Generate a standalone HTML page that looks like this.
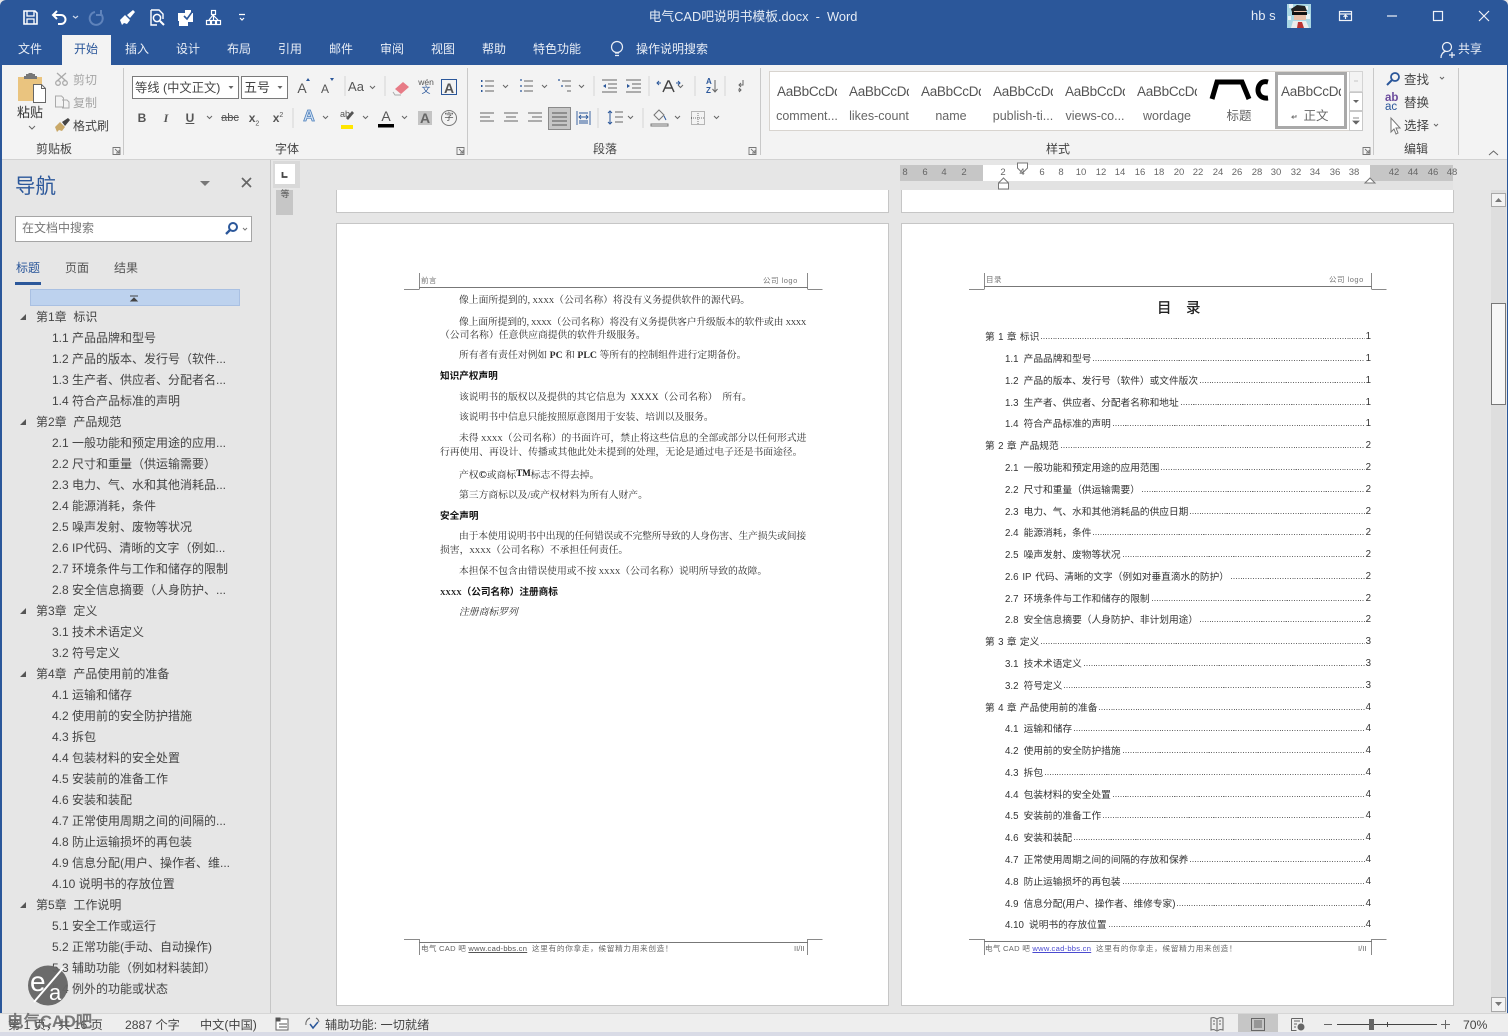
<!DOCTYPE html>
<html lang="zh-CN"><head><meta charset="utf-8"><title>Word</title>
<style>
html,body{margin:0;padding:0;background:#e6e6e6}
#w{position:relative;width:1508px;height:1036px;overflow:hidden;background:#e6e6e6;font-family:"Liberation Sans","Noto Sans CJK SC",sans-serif;color:#444;font-size:12px}
.b{position:absolute;box-sizing:border-box}
.t,.c{position:absolute;white-space:nowrap;line-height:20px;height:20px;margin-top:1px}
.c{transform:translateX(-50%)}
svg{position:absolute;left:0;top:0}
.tab{color:#e9eef6;font-size:12px}
.lab{font-size:12px;color:#444}
.n{font-size:12px;color:#444;margin-top:2px}
.st{font-size:13.5px;color:#555;overflow:hidden;text-align:left;width:60px;letter-spacing:-.3px}
.sl{font-size:12.5px;color:#666}
.d{font-family:"Liberation Serif","Noto Serif CJK SC",serif;font-size:9.8px;color:#2c2c2c;margin-top:4px}
.db{font-family:"Liberation Serif","Noto Sans CJK SC",sans-serif;font-size:9.65px;color:#111;font-weight:700;margin-top:4px}
.x{font-size:7.5px}
.j{text-align:justify;text-align-last:justify}
.h{font-size:7.5px;color:#777;letter-spacing:.5px;margin-top:0}
.f{font-size:7.6px;color:#666;letter-spacing:.25px;margin-top:2px}
.f em{font-style:normal;letter-spacing:.72px}
.toc{position:absolute;display:flex;align-items:center;left:985px;width:386px;height:14px;font-size:9.7px;color:#333;white-space:nowrap;word-spacing:.7px}
.toc.s{left:1005px;width:366px;word-spacing:2.5px}
.toc i{flex:1;height:1px;margin:5px 1px 0 2px;background:repeating-linear-gradient(90deg,#666 0 1px,transparent 1px 2.45px)}
.toc b{font-weight:400}
.s2{font-size:12.2px;color:#444;margin-top:2px}
</style></head><body><div id="w">

<!-- backgrounds -->
<div class="b" style="left:0;top:0;width:1508px;height:65px;background:#2b579a;border-radius:6px 6px 0 0"></div>
<div class="b" style="left:62px;top:35px;width:49px;height:30px;background:#f3f3f3"></div>
<div class="b" style="left:0;top:65px;width:1508px;height:95px;background:#f3f3f3;border-bottom:1px solid #d2d2d2"></div>
<div class="b" style="left:0;top:160px;width:1508px;height:853px;background:#e6e6e6"></div>
<div class="b" style="left:270px;top:160px;width:1px;height:853px;background:#c6c6c6"></div>
<div class="b" style="left:0;top:60px;width:1.5px;height:975px;background:#2b579a"></div>
<div class="b" style="right:0;top:60px;width:1.5px;height:975px;background:#2b579a"></div>

<!-- tab selector -->
<div class="b" style="left:273px;top:161px;width:27px;height:27px;background:#d9d9d9"></div>
<div class="b" style="left:275px;top:164px;width:20px;height:20px;background:#fff"></div>
<div class="b" style="left:276px;top:190px;width:17px;height:25px;background:#c6c6c6"></div>
<div class="c" style="left:285px;top:183px;font-size:9px;color:#555">等</div>

<!-- pages -->
<div class="b" style="left:336px;top:190px;width:553px;height:23px;background:#fff;border:1px solid #c6c6c6;border-top:0"></div>
<div class="b" style="left:901px;top:190px;width:553px;height:23px;background:#fff;border:1px solid #c6c6c6;border-top:0"></div>
<div class="b" style="left:336px;top:223px;width:553px;height:783px;background:#fff;border:1px solid #c6c6c6"></div>
<div class="b" style="left:901px;top:223px;width:553px;height:783px;background:#fff;border:1px solid #c6c6c6"></div>

<!-- ruler -->
<div class="b" style="left:900px;top:165px;width:553px;height:16px;background:#c6c6c6"></div>
<div class="b" style="left:983px;top:165px;width:387px;height:16px;background:#fff"></div>
<div class="b" style="left:900px;top:181px;width:553px;height:9px;background:#e2e2e2"></div>

<!-- scrollbar -->
<div class="b" style="left:1491px;top:190px;width:15px;height:823px;background:#dedede"></div>
<div class="b" style="left:1491px;top:193px;width:15px;height:14px;background:#f3f3f3;border:1px solid #a8a8a8"></div>
<div class="b" style="left:1491px;top:997px;width:15px;height:15px;background:#f3f3f3;border:1px solid #a8a8a8"></div>
<div class="b" style="left:1491px;top:303px;width:15px;height:102px;background:#f6f6f6;border:1px solid #777"></div>

<!-- status -->
<div class="b" style="left:0;top:1013px;width:1508px;height:19px;background:#eeeeee;border-top:1px solid #d6d6d6"></div>
<div class="b" style="left:0;top:1032px;width:1508px;height:4px;background:#d9dbe6"></div>
<div class="b" style="left:1238px;top:1014px;width:40px;height:18px;background:#c6c6c6"></div>

<!-- ribbon boxes -->
<div class="b" style="left:132px;top:76px;width:107px;height:23px;background:#fff;border:1px solid #7a7a7a"></div>
<div class="b" style="left:241px;top:76px;width:47px;height:23px;background:#fff;border:1px solid #7a7a7a"></div>
<div class="b" style="left:769px;top:71px;width:581px;height:60px;background:#fff;border:1px solid #d8d4cf"></div>
<div class="b" style="left:1275px;top:72px;width:72px;height:57px;background:#fff;border:3px solid #a9a9a9"></div>
<div class="b" style="left:1349px;top:71px;width:14px;height:21px;background:#f3f3f3;border:1px solid #d4d4d4"></div>
<div class="b" style="left:1349px;top:92px;width:14px;height:19px;background:#fff;border:1px solid #c8c8c8"></div>
<div class="b" style="left:1349px;top:111px;width:14px;height:20px;background:#fff;border:1px solid #c8c8c8"></div>
<div class="b" style="left:548px;top:107px;width:23px;height:23px;background:#c6c6c6;border:1px solid #8a8a8a"></div>
<div class="b" style="left:30px;top:289px;width:210px;height:17px;background:#bdd2ee;border:1px solid #a9c0e2"></div>
<div class="b" style="left:15px;top:216px;width:237px;height:26px;background:#fff;border:1px solid #a5a5a5"></div>
<div class="b" style="left:15px;top:282px;width:26px;height:3px;background:#2b579a"></div>

<!-- icons -->
<svg width="1508" height="1036" viewBox="0 0 1508 1036" fill="none">
<!-- QAT -->
<g stroke="#fff" stroke-width="1.6">
<path d="M24 11h11l2 2v11H24z"/><path d="M27 11v5h7v-5M27 24v-5h7v5" stroke-width="1.3"/>
<path d="M54 15h7a4.500 4.500 0 0 1 0 9h-3M57 11l-4 4 4 4" stroke-width="2"/>
<path d="M95 12a6.500 6.500 0 1 0 6 2M101 10v5h-5" stroke="#5f83bb" stroke-width="2"/>
<path d="M151 10h8l4 4v5M151 10v15h6" stroke-width="1.4"/><circle cx="157" cy="18" r="3.600" stroke-width="1.5"/><path d="M160 21l4 4" stroke-width="2"/>
</g>
<path d="M120 20l5-5 5 5-3 4-3-1-2 2z" fill="#fff"/><path d="M127 15l6-5 2 2-5 6z" fill="#fff"/>
<path d="M178 13h7v-3h6v3h2v9h-5v4h-9v-5h-1z" fill="#fff"/><path d="M184 16l3 3 5-7" stroke="#2b579a" stroke-width="1.6"/>
<g stroke="#fff" stroke-width="1.2"><rect x="211.500" y="10.500" width="4" height="4"/><rect x="206.500" y="20.500" width="4" height="4"/><rect x="211.500" y="20.500" width="4" height="4"/><rect x="216.500" y="20.500" width="4" height="4"/><path d="M213.500 15v5M209 20l4-5 5 5"/></g>
<path d="M239 14.500h6M240 18l2 2 2-2" stroke="#fff" stroke-width="1.2"/><path d="M73 16l2.500 2 2.500-2" stroke="#cdd8ea" stroke-width="1.2"/>
<!-- window -->
<g stroke="#f0f3f8" stroke-width="1.2"><rect x="1339.500" y="11.500" width="12" height="9"/><path d="M1339.500 14h12M1345.500 19v-4M1343.500 17l2-2 2 2"/><path d="M1387 16h10" /><rect x="1433.500" y="11.500" width="9" height="9"/><path d="M1479 11l10 10M1489 11l-10 10"/>
<circle cx="1447" cy="47" r="4.500"/><path d="M1441 58c0-4 2-6 5-7M1452 52v6M1449 55h6"/></g>
<circle cx="617" cy="47" r="5.500" stroke="#e9eef6" stroke-width="1.200"/><path d="M615 53h4M615 55.500h4" stroke="#e9eef6" stroke-width="1.200"/>
<!-- avatar -->
<rect x="1287" y="4" width="24" height="24" fill="#a9d7e4"/><path d="M1289 4h4v4h-4zM1303 6h5v4h-5zM1288 16h3v4h-3zM1306 14h4v5h-4z" fill="#e8f3f6"/>
<path d="M1291 9l6-4 8 1 2 5-15 1z" fill="#222"/><rect x="1294" y="11" width="12" height="9" fill="#e8bfa8"/><path d="M1292 12h15v3h-15z" fill="#111"/><path d="M1291 28l2-7h13l3 7z" fill="#ececec"/><path d="M1298 22h4l2 6h-7z" fill="#b33"/>
<!-- clipboard -->
<path d="M18 77h24v15H33v9H18z" fill="#eac47f"/><path d="M26 76v-2h2l1-1h3l1 1h2v2h2v3H24v-3z" fill="#777"/>
<path d="M33.500 84.500h8l4 4v14h-12z" fill="#fff" stroke="#666"/><path d="M41.500 84.500v4h4" stroke="#666"/>
<path d="M29 126l3 3 3-3M1440 77l2 2 2-2M1434 124l2 2 2-2" stroke="#666"/>
<!-- cut/copy/brush -->
<g stroke="#aaa" stroke-width="1.300"><path d="M57 73l9 8M66 73l-9 8"/><circle cx="58" cy="83" r="2.300"/><circle cx="65" cy="83" r="2.300"/><path d="M55.500 96h6l2 2v9h-8zM62 100h5l2 2v6h-7" stroke-width="1"/></g>
<path d="M55 127l5-5 5 5-3 4-3-1-2 2z" fill="#c9a868"/><path d="M62 122l6-4 2 2-5 6z" fill="#444"/>
<!-- font chevrons and icons -->
<path d="M228.500 86l2.500 3 2.500-3zM277.500 86l2.500 3 2.500-3z" fill="#666"/>
<path d="M370 86l2.500 2.500 2.500-2.500M207 116l2.500 2.500 2.500-2.500M323 116l2.500 2.500 2.500-2.500M363 116l2.500 2.500 2.500-2.500M402 116l2.500 2.500 2.500-2.500M503 85l2.500 2.500 2.500-2.500M542 85l2.500 2.500 2.500-2.500M579 85l2.500 2.500 2.500-2.500M678 85l2.500 2.500 2.500-2.500M628 116l2.500 2.500 2.500-2.500M675 116l2.500 2.500 2.500-2.500M714 116l2.500 2.500 2.500-2.500" stroke="#666"/>
<path d="M306 81l2-3 2 3zM330 78l2 3 2-3z" fill="#2b579a"/>
<path d="M345 76v20M385 76v20M293 108v20M594 76v20M649 76v20M695 76v20M725 76v20M598 108v20M643 108v20" stroke="#d6d6d6"/>
<path d="M395 89l8-7 6 5-8 7z" fill="#e77b86"/><path d="M393 92l2 3h6" stroke="#aaa"/>
<rect x="441.500" y="79.500" width="15" height="15" stroke="#2b579a"/>
<path d="M341 127h12" stroke="#ffe600" stroke-width="4"/><path d="M346 118l6-7 2 2-6 7z" fill="#555"/>
<rect x="378" y="124" width="16" height="3.500" fill="#000"/>
<rect x="418" y="111" width="14" height="14" fill="#c4c4c4"/>
<circle cx="449" cy="118" r="7.500" stroke="#777"/>
<!-- paragraph -->
<g stroke="#666"><path d="M485 81h9M485 86h9M485 91h9M524 81h9M524 86h9M524 91h9M562 81h9M565 86h6M567 91h4"/>
<path d="M602 80h15M608 84h9M608 88h9M602 92h15M626 80h15M632 84h9M632 88h9M626 92h15"/>
<path d="M480 113h14M480 117h10M480 121h14M504 113h14M506 117h10M504 121h14M528 113h14M532 117h10M528 121h14"/>
<path d="M552 113h15M552 117h15M552 121h15M552 125h15" stroke="#555"/>
<path d="M577 111v14M590 111v14M579 113h9M579 121h9M579 123h9M579 117h9M581 115l-2 2 2 2M586 115l2 2-2 2" stroke="#2b579a" stroke-width=".9"/>
<path d="M615 112h8M615 117h8M615 122h8"/><path d="M610 111v13" stroke="#2b579a"/><path d="M608 113l2-2 2 2M608 122l2 2 2-2" stroke="#2b579a"/>
<path d="M715 80v12M712.500 89l2.500 3 2.500-3"/><path d="M743 80v5h-4M741 83l-2 2 2 2M738 90h3M739 88l2 2-2 2"/></g>
<path d="M481 81h1.500M481 86h1.500M481 91h1.500" stroke="#2b579a" stroke-width="2"/>
<path d="M520 80h2M520 86h2M520 91h2M558 80h2M561 86h2" stroke="#2b579a" stroke-width="1.300"/>
<path d="M603 86l3-2v4zM627 84l3 2-3 2z" fill="#2b579a"/>
<path d="M663 92l5-11h1l5 11M665 88h7" stroke="#444" stroke-width="1.500"/><path d="M659 85l-2-2 2-2M678 85l2-2-2-2M657 83h4M676 83h4" stroke="#2b579a"/>
<path d="M654 115l5-5 5 5-5 5zM651 124h17v2h-17z" stroke="#777"/><path d="M664 116l2 4" stroke="#2b579a"/>
<rect x="691.500" y="111.500" width="13" height="13" stroke="#777" stroke-dasharray="1 1"/><path d="M698 111v14M691 118h14" stroke="#777" stroke-dasharray="1 1"/>
<!-- launchers -->
<g stroke="#777" stroke-width=".9"><path d="M113 147.500h7v7h-7zM115 149l4 4M116 153h3v-3"/><path d="M457 147.500h7v7h-7zM459 149l4 4M460 153h3v-3"/><path d="M749 147.500h7v7h-7zM751 149l4 4M752 153h3v-3"/><path d="M1363 147.500h7v7h-7zM1365 149l4 4M1366 153h3v-3"/></g>
<path d="M123.500 68v87M467.500 68v87M760.500 68v87M1373.500 68v87M1458.500 68v87" stroke="#c9c9c9"/>
<path d="M1489 155l4.500-4 4.500 4" stroke="#666"/>
<!-- styles -->
<path d="M1212 99l5-17h25l7 17" stroke="#000" stroke-width="5"/><path d="M1268 82c-8-2-10 5-10 8s2 9 10 8" stroke="#000" stroke-width="5"/>
<path d="M1354 81h4" stroke="#c4c4c4"/><path d="M1353 100l3 3 3-3z" fill="#666"/><path d="M1353 118h6M1353 121l3 3 3-3z" stroke="#666" fill="#666" stroke-width=".8"/>
<path d="M1296 115v2h-4l1.500-1.500M1292 117l1.500 1.500" stroke="#777"/>
<!-- edit -->
<circle cx="1395" cy="77" r="4" stroke="#2b579a" stroke-width="1.800"/><path d="M1392 80l-5 5" stroke="#2b579a" stroke-width="2"/>
<path d="M1391 118v14l3-3 2 5 2-1-2-5h4z" fill="#fff" stroke="#777"/>
<!-- ruler marks -->
<path d="M1017.500 163h10v5l-5 5-5-5z" fill="#fff" stroke="#777"/><path d="M998.500 189v-6l5-5 5 5v6h-10zM998.500 183h10" fill="#fff" stroke="#777"/>
<path d="M1365 183l5-5 5 5z" fill="#fff" stroke="#777"/>
<!-- tab L -->
<path d="M282.500 172v5h5" stroke="#444" stroke-width="1.800"/>
<!-- nav -->
<path d="M200 181h10l-5 5z" fill="#777"/><path d="M242 178l9 9M251 178l-9 9" stroke="#666" stroke-width="1.700"/>
<circle cx="233" cy="227" r="4" stroke="#2b579a" stroke-width="2"/><path d="M230 230l-4 4" stroke="#2b579a" stroke-width="2.300"/><path d="M243 228l2 2 2-2" stroke="#777"/>
<path d="M130 296h8M131 301l3-3 3 3z" stroke="#444" fill="#444"/>
<path d="M20 320h6v-6zM20 425h6v-6zM20 614h6v-6zM20 677h6v-6zM20 908h6v-6z" fill="#555"/>
<!-- scroll arrows -->
<path d="M1495 202l3.500-4 3.500 4zM1495 1002l3.500 4 3.500-4z" fill="#777"/>
<!-- page crop marks -->
<g stroke="#8a8a8a"><path d="M419.500 273v16M404 289.500h15.500M807.500 273v16M807.500 289.500h15"/><path d="M984.500 273v16M969 289.500h15.500M1371.500 273v16M1371.500 289.500h15"/>
<path d="M419.500 939v16M404 939.500h15.500M807.500 939v16M807.500 939.500h15"/><path d="M984.500 939v16M969 939.500h15.500M1371.500 939v16M1371.500 939.500h15"/></g>
<path d="M419 287.500h389M984 286.500h388M419 942.500h389M984 941.500h388" stroke="#777"/>
<!-- status icons -->
<rect x="276" y="1019" width="12" height="11" fill="#fff" stroke="#666"/><path d="M276 1021h4v-3h-4zM279 1024h8M279 1027h8" fill="#555" stroke="#555"/>
<path d="M306 1025a6 6 0 0 1 4-7M316 1018a6 6 0 0 1 3 4" stroke="#666"/><path d="M310 1024l3 4 5-6" stroke="#2b579a" stroke-width="1.500"/>
<g stroke="#666"><path d="M1211 1018c3-1 4 0 6 1 2-1 3-2 6-1v12c-3-1-4 0-6 1-2-1-3-2-6-1zM1217 1019v11M1213 1021h2M1213 1024h2M1219 1021h2M1219 1024h2"/>
<rect x="1251.500" y="1018.500" width="13" height="12"/><path d="M1254 1021h8M1254 1023h8M1254 1025h8M1254 1027h8"/>
<path d="M1291.500 1018.500h11v4M1291.500 1018.500v12h5M1294 1021h6M1294 1024h3M1294 1027h2"/>
<path d="M1324 1024.500h8M1441 1024.500h9M1445.500 1020v9"/></g>
<circle cx="1301" cy="1027" r="3.500" fill="#666"/>
<path d="M1337 1024.500h100" stroke="#444"/><path d="M1387.500 1022v5" stroke="#444"/><rect x="1369" y="1019" width="5" height="11" fill="#666"/>
</svg>

<!-- titlebar text -->
<div class="c" style="left:753px;top:6px;font-size:12.8px;color:#e6ecf5">电气CAD吧说明书模板.docx&nbsp; - &nbsp;Word</div>
<div class="t" style="left:1251px;top:5px;font-size:13px;color:#e6ecf5">hb s</div>
<div class="c tab" style="left:30px;top:38px">文件</div>
<div class="c tab" style="left:86px;top:38px;color:#2b579a">开始</div>
<div class="c tab" style="left:137px;top:38px">插入</div>
<div class="c tab" style="left:188px;top:38px">设计</div>
<div class="c tab" style="left:239px;top:38px">布局</div>
<div class="c tab" style="left:290px;top:38px">引用</div>
<div class="c tab" style="left:341px;top:38px">邮件</div>
<div class="c tab" style="left:392px;top:38px">审阅</div>
<div class="c tab" style="left:443px;top:38px">视图</div>
<div class="c tab" style="left:494px;top:38px">帮助</div>
<div class="c tab" style="left:557px;top:38px">特色功能</div>
<div class="c tab" style="left:672px;top:38px">操作说明搜索</div>
<div class="t tab" style="left:1458px;top:38px">共享</div>

<!-- clipboard group -->
<div class="c" style="left:30px;top:102px;font-size:13px;color:#333">粘贴</div>
<div class="t" style="left:73px;top:69px;font-size:12px;color:#a6a6a6">剪切</div>
<div class="t" style="left:73px;top:92px;font-size:12px;color:#a6a6a6">复制</div>
<div class="t" style="left:73px;top:115px;font-size:12px;color:#444">格式刷</div>
<div class="c lab" style="left:54px;top:138px">剪贴板</div>
<div class="c lab" style="left:287px;top:138px">字体</div>
<div class="c lab" style="left:605px;top:138px">段落</div>
<div class="c lab" style="left:1058px;top:138px">样式</div>
<div class="c lab" style="left:1416px;top:138px">编辑</div>

<!-- font group -->
<div class="t" style="left:135px;top:77px;font-size:12.3px;color:#444">等线 (中文正文)</div>
<div class="t" style="left:244px;top:77px;font-size:13px;color:#444">五号</div>
<div class="c" style="left:302px;top:77px;font-size:14px;color:#555">A</div>
<div class="c" style="left:325px;top:78px;font-size:12px;color:#555">A</div>
<div class="c" style="left:356px;top:76px;font-size:13px;color:#555">Aa</div>
<div class="c" style="left:426px;top:71px;font-size:8.500px;color:#555">wén</div>
<div class="c" style="left:426px;top:79px;font-size:9px;color:#2b579a">文</div>
<div class="c" style="left:449px;top:77px;font-size:14px;font-weight:700;color:#555">A</div>
<div class="c" style="left:142px;top:107px;font-size:12px;font-weight:700;color:#555">B</div>
<div class="c" style="left:166px;top:107px;font-size:12px;font-style:italic;font-family:'Liberation Serif',serif;font-weight:700;color:#555">I</div>
<div class="c" style="left:190px;top:107px;font-size:12px;font-weight:700;color:#555;text-decoration:underline">U</div>
<div class="c" style="left:230px;top:107px;font-size:11px;color:#555;text-decoration:line-through">abc</div>
<div class="c" style="left:254px;top:107px;font-size:12px;font-weight:700;color:#555">x<sub style="font-size:7px;font-weight:400">2</sub></div>
<div class="c" style="left:278px;top:107px;font-size:12px;font-weight:700;color:#555">x<sup style="font-size:7px;font-weight:400;line-height:0">2</sup></div>
<div class="c" style="left:309px;top:106px;font-size:16px;font-weight:700;color:#cfe0f3;-webkit-text-stroke:.8px #4a7ebb">A</div>
<div class="c" style="left:345px;top:103px;font-size:9px;color:#555">ab</div>
<div class="c" style="left:386px;top:105px;font-size:14px;color:#555">A</div>
<div class="c" style="left:425px;top:107px;font-size:14px;font-weight:700;color:#666">A</div>
<div class="c" style="left:449px;top:107px;font-size:9.500px;color:#555">字</div>
<div class="c" style="left:710px;top:76px;font-size:8px;line-height:9px;height:18px;font-weight:700;color:#2b579a;white-space:normal;width:8px">A Z</div>

<!-- styles -->
<div class="t st" style="left:777px;top:81px">AaBbCcDd</div>
<div class="c sl" style="left:807px;top:105px">comment...</div>
<div class="t st" style="left:849px;top:81px">AaBbCcDd</div>
<div class="c sl" style="left:879px;top:105px">likes-count</div>
<div class="t st" style="left:921px;top:81px">AaBbCcDd</div>
<div class="c sl" style="left:951px;top:105px">name</div>
<div class="t st" style="left:993px;top:81px">AaBbCcDd</div>
<div class="c sl" style="left:1023px;top:105px">publish-ti...</div>
<div class="t st" style="left:1065px;top:81px">AaBbCcDd</div>
<div class="c sl" style="left:1095px;top:105px">views-co...</div>
<div class="t st" style="left:1137px;top:81px">AaBbCcDd</div>
<div class="c sl" style="left:1167px;top:105px">wordage</div>
<div class="c sl" style="left:1239px;top:105px">标题</div>
<div class="t st" style="left:1281px;top:81px">AaBbCcDd</div>
<div class="c sl" style="left:1316px;top:105px">正文</div>

<!-- edit -->
<div class="t" style="left:1404px;top:69px;font-size:12.500px">查找</div>
<div class="t" style="left:1385px;top:93px;font-size:11.500px;line-height:9px;height:9px;color:#6b4a9c;font-weight:700">ab</div>
<div class="t" style="left:1385px;top:102px;font-size:11.500px;line-height:9px;height:9px;color:#2b579a">ac</div>
<div class="t" style="left:1404px;top:92px;font-size:12.500px">替换</div>
<div class="t" style="left:1404px;top:115px;font-size:12.500px">选择</div>

<!-- ruler numbers -->
<div style="font-size:9.5px;color:#666">
<div class="c" style="left:905px;top:162px">8</div><div class="c" style="left:925px;top:162px">6</div><div class="c" style="left:944px;top:162px">4</div><div class="c" style="left:964px;top:162px">2</div>
<div class="c" style="left:1003px;top:162px">2</div><div class="c" style="left:1022px;top:162px">4</div><div class="c" style="left:1042px;top:162px">6</div><div class="c" style="left:1061px;top:162px">8</div><div class="c" style="left:1081px;top:162px">10</div><div class="c" style="left:1101px;top:162px">12</div><div class="c" style="left:1120px;top:162px">14</div><div class="c" style="left:1140px;top:162px">16</div><div class="c" style="left:1159px;top:162px">18</div><div class="c" style="left:1179px;top:162px">20</div><div class="c" style="left:1198px;top:162px">22</div><div class="c" style="left:1218px;top:162px">24</div><div class="c" style="left:1237px;top:162px">26</div><div class="c" style="left:1257px;top:162px">28</div><div class="c" style="left:1276px;top:162px">30</div><div class="c" style="left:1296px;top:162px">32</div><div class="c" style="left:1315px;top:162px">34</div><div class="c" style="left:1335px;top:162px">36</div><div class="c" style="left:1354px;top:162px">38</div><div class="c" style="left:1394px;top:162px">42</div><div class="c" style="left:1413px;top:162px">44</div><div class="c" style="left:1433px;top:162px">46</div><div class="c" style="left:1452px;top:162px">48</div>
</div>

<!-- nav pane -->
<div class="t" style="left:15px;top:176px;font-size:20.500px;color:#2b579a">导航</div>
<div class="t" style="left:22px;top:217px;font-size:12px;color:#777">在文档中搜索</div>
<div class="t" style="left:16px;top:257px;font-size:12px;color:#2b579a">标题</div>
<div class="t" style="left:65px;top:257px;font-size:12px;color:#555">页面</div>
<div class="t" style="left:114px;top:257px;font-size:12px;color:#555">结果</div>
<div class="t n" style="left:36px;top:305px">第1章&nbsp; 标识</div>
<div class="t n" style="left:52px;top:326px">1.1 产品品牌和型号</div>
<div class="t n" style="left:52px;top:347px">1.2 产品的版本、发行号（软件...</div>
<div class="t n" style="left:52px;top:368px">1.3 生产者、供应者、分配者名...</div>
<div class="t n" style="left:52px;top:389px">1.4 符合产品标准的声明</div>
<div class="t n" style="left:36px;top:410px">第2章&nbsp; 产品规范</div>
<div class="t n" style="left:52px;top:431px">2.1 一般功能和预定用途的应用...</div>
<div class="t n" style="left:52px;top:452px">2.2 尺寸和重量（供运输需要）</div>
<div class="t n" style="left:52px;top:473px">2.3 电力、气、水和其他消耗品...</div>
<div class="t n" style="left:52px;top:494px">2.4 能源消耗，条件</div>
<div class="t n" style="left:52px;top:515px">2.5 噪声发射、废物等状况</div>
<div class="t n" style="left:52px;top:536px">2.6 IP代码、清晰的文字（例如...</div>
<div class="t n" style="left:52px;top:557px">2.7 环境条件与工作和储存的限制</div>
<div class="t n" style="left:52px;top:578px">2.8 安全信息摘要（人身防护、...</div>
<div class="t n" style="left:36px;top:599px">第3章&nbsp; 定义</div>
<div class="t n" style="left:52px;top:620px">3.1 技术术语定义</div>
<div class="t n" style="left:52px;top:641px">3.2 符号定义</div>
<div class="t n" style="left:36px;top:662px">第4章&nbsp; 产品使用前的准备</div>
<div class="t n" style="left:52px;top:683px">4.1 运输和储存</div>
<div class="t n" style="left:52px;top:704px">4.2 使用前的安全防护措施</div>
<div class="t n" style="left:52px;top:725px">4.3 拆包</div>
<div class="t n" style="left:52px;top:746px">4.4 包装材料的安全处置</div>
<div class="t n" style="left:52px;top:767px">4.5 安装前的准备工作</div>
<div class="t n" style="left:52px;top:788px">4.6 安装和装配</div>
<div class="t n" style="left:52px;top:809px">4.7 正常使用周期之间的间隔的...</div>
<div class="t n" style="left:52px;top:830px">4.8 防止运输损坏的再包装</div>
<div class="t n" style="left:52px;top:851px">4.9 信息分配(用户、操作者、维...</div>
<div class="t n" style="left:52px;top:872px">4.10 说明书的存放位置</div>
<div class="t n" style="left:36px;top:893px">第5章&nbsp; 工作说明</div>
<div class="t n" style="left:52px;top:914px">5.1 安全工作或运行</div>
<div class="t n" style="left:52px;top:935px">5.2 正常功能(手动、自动操作)</div>
<div class="t n" style="left:52px;top:956px">5.3 辅助功能（例如材料装卸）</div>
<div class="t n" style="left:52px;top:977px">5.4 例外的功能或状态</div>

<!-- left page -->
<div class="t h" style="left:421px;top:271px">前言</div>
<div class="t h" style="left:763px;top:271px">公司 logo</div>
<div class="t d" style="left:459px;top:287px">像上面所提到的, <span class="x">XXXX</span>（公司名称）将没有义务提供软件的源代码。</div>
<div class="t d j" style="left:459px;top:309px;width:347px;letter-spacing:-.32px">像上面所提到的, <span class="x">XXXX</span>（公司名称）将没有义务提供客户升级版本的软件或由 <span class="x">XXXX</span></div>
<div class="t d" style="left:440px;top:322px">（公司名称）任意供应商提供的软件升级服务。</div>
<div class="t d" style="left:459px;top:342px">所有者有责任对例如 <b>PC</b> 和 <b>PLC</b> 等所有的控制组件进行定期备份。</div>
<div class="t db" style="left:440px;top:363px">知识产权声明</div>
<div class="t d" style="left:459px;top:384px">该说明书的版权以及提供的其它信息为&nbsp; XXXX（公司名称）&nbsp; 所有。</div>
<div class="t d" style="left:459px;top:404px">该说明书中信息只能按照原意图用于安装、培训以及服务。</div>
<div class="t d j" style="left:459px;top:425px;width:347px">未得 <span class="x">XXXX</span>（公司名称）的书面许可，禁止将这些信息的全部或部分以任何形式进</div>
<div class="t d" style="left:440px;top:439px">行再使用、再设计、传播或其他此处未提到的处理，无论是通过电子还是书面途径。</div>
<div class="t d" style="left:459px;top:461px">产权<b style="font-size:11px;color:#111">©</b>或商标<b style="font-size:9px;color:#111;position:relative;top:-2px">TM</b>标志不得去掉。</div>
<div class="t d" style="left:459px;top:482px">第三方商标以及/或产权材料为所有人财产。</div>
<div class="t db" style="left:440px;top:503px">安全声明</div>
<div class="t d j" style="left:459px;top:523px;width:347px;letter-spacing:-.17px">由于本使用说明书中出现的任何错误或不完整所导致的人身伤害、生产损失或间接</div>
<div class="t d" style="left:440px;top:537px">损害，<span class="x">XXXX</span>（公司名称）不承担任何责任。</div>
<div class="t d" style="left:459px;top:558px">本担保不包含由错误使用或不按 <span class="x">XXXX</span>（公司名称）说明所导致的故障。</div>
<div class="t db" style="left:440px;top:579px"><span class="x">XXXX</span>（公司名称）注册商标</div>
<div class="t d" style="left:459px;top:599px;font-style:italic">注册商标罗列</div>
<div class="t f" style="left:421px;top:937px">电气 CAD 吧 <u style="color:#555">www.cad-bbs.cn</u> &nbsp;<em>这里有的你拿走，候留精力用来创造！</em></div>
<div class="t f" style="left:794px;top:937px;letter-spacing:0">II/II</div>

<!-- right page -->
<div class="t h" style="left:986px;top:270px">目录</div>
<div class="t h" style="left:1329px;top:270px">公司 logo</div>
<div class="t" style="left:1157px;top:298px;font-size:14.5px;color:#222;font-weight:500">目</div>
<div class="t" style="left:1186px;top:298px;font-size:14.5px;color:#222;font-weight:500">录</div>
<div class="toc" style="top:329px">第 1 章 标识<i></i><b>1</b></div>
<div class="toc s" style="top:351px">1.1 产品品牌和型号<i></i><b>1</b></div>
<div class="toc s" style="top:373px">1.2 产品的版本、发行号（软件）或文件版次<i></i><b>1</b></div>
<div class="toc s" style="top:395px">1.3 生产者、供应者、分配者名称和地址<i></i><b>1</b></div>
<div class="toc s" style="top:416px">1.4 符合产品标准的声明<i></i><b>1</b></div>
<div class="toc" style="top:438px">第 2 章 产品规范<i></i><b>2</b></div>
<div class="toc s" style="top:460px">2.1 一般功能和预定用途的应用范围<i></i><b>2</b></div>
<div class="toc s" style="top:482px">2.2 尺寸和重量（供运输需要）<i></i><b>2</b></div>
<div class="toc s" style="top:504px">2.3 电力、气、水和其他消耗品的供应日期<i></i><b>2</b></div>
<div class="toc s" style="top:525px">2.4 能源消耗，条件<i></i><b>2</b></div>
<div class="toc s" style="top:547px">2.5 噪声发射、废物等状况<i></i><b>2</b></div>
<div class="toc s" style="top:569px;word-spacing:1.2px">2.6 IP 代码、清晰的文字（例如对垂直滴水的防护）<i></i><b>2</b></div>
<div class="toc s" style="top:591px">2.7 环境条件与工作和储存的限制<i></i><b>2</b></div>
<div class="toc s" style="top:612px">2.8 安全信息摘要（人身防护、非计划用途）<i></i><b>2</b></div>
<div class="toc" style="top:634px">第 3 章 定义<i></i><b>3</b></div>
<div class="toc s" style="top:656px">3.1 技术术语定义<i></i><b>3</b></div>
<div class="toc s" style="top:678px">3.2 符号定义<i></i><b>3</b></div>
<div class="toc" style="top:700px">第 4 章 产品使用前的准备<i></i><b>4</b></div>
<div class="toc s" style="top:721px">4.1 运输和储存<i></i><b>4</b></div>
<div class="toc s" style="top:743px">4.2 使用前的安全防护措施<i></i><b>4</b></div>
<div class="toc s" style="top:765px">4.3 拆包<i></i><b>4</b></div>
<div class="toc s" style="top:787px">4.4 包装材料的安全处置<i></i><b>4</b></div>
<div class="toc s" style="top:808px">4.5 安装前的准备工作<i></i><b>4</b></div>
<div class="toc s" style="top:830px">4.6 安装和装配<i></i><b>4</b></div>
<div class="toc s" style="top:852px">4.7 正常使用周期之间的间隔的存放和保养<i></i><b>4</b></div>
<div class="toc s" style="top:874px">4.8 防止运输损坏的再包装<i></i><b>4</b></div>
<div class="toc s" style="top:896px">4.9 信息分配(用户、操作者、维修专家)<i></i><b>4</b></div>
<div class="toc s" style="top:917px">4.10 说明书的存放位置<i></i><b>4</b></div>
<div class="t f" style="left:985px;top:937px">电气 CAD 吧 <u style="color:#4a4ad0">www.cad-bbs.cn</u> &nbsp;<em>这里有的你拿走，候留精力用来创造！</em></div>
<div class="t f" style="left:1358px;top:937px;letter-spacing:0">I/II</div>

<!-- status -->
<div class="t s2" style="left:8px;top:1013px">第 1 页，共 16 页</div>
<div class="t s2" style="left:125px;top:1013px">2887 个字</div>
<div class="t s2" style="left:200px;top:1013px">中文(中国)</div>
<div class="t s2" style="left:325px;top:1013px">辅助功能: 一切就绪</div>
<div class="t s2" style="left:1463px;top:1013px">70%</div>

<!-- watermark -->
<svg width="1508" height="1036" viewBox="0 0 1508 1036" fill="none">
<circle cx="48" cy="985.500" r="20" fill="#666" fill-opacity=".96"/>
<path d="M34 1002L63 968" stroke="#fff" stroke-width="2"/>
<text x="30" y="991" font-family="Liberation Sans" font-size="28" fill="#fff">e</text>
<text x="49" y="1000" font-family="Liberation Sans" font-size="22" fill="#fff">a</text>
</svg>
<div class="t" style="left:7px;top:1011px;font-size:16.5px;font-weight:700;color:#666;opacity:.85">电气CAD吧</div>
</div></body></html>
